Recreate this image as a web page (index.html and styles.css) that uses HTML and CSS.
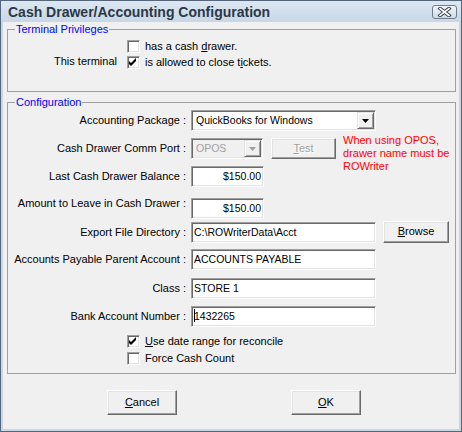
FILE: index.html
```html
<!DOCTYPE html>
<html lang="en">
<head>
<meta charset="utf-8">
<title>Cash Drawer/Accounting Configuration</title>
<link rel="stylesheet" href="styles.css">
</head>
<body>
<div class="window">
  <div class="titlebar">
    <span class="title">Cash Drawer/Accounting Configuration</span>
    <span class="close">
      <svg width="17" height="10" viewBox="0 0 17 10">
        <path d="M4 1.5 L13 8.5 M13 1.5 L4 8.5" stroke="#3a4654" stroke-width="3.6" stroke-linecap="square"/>
        <path d="M4 1.5 L13 8.5 M13 1.5 L4 8.5" stroke="#ffffff" stroke-width="1.6" stroke-linecap="square"/>
      </svg>
    </span>
  </div>
  <div class="client">
    <fieldset class="group group-term">
      <legend>Terminal Privileges</legend>
      <div class="term-grid">
        <div class="term-label">This terminal</div>
        <label class="check term-c1"><span class="cb"></span><span>has a cash <u>d</u>rawer.</span></label>
        <label class="check term-c2"><span class="cb"><svg width="9" height="9" viewBox="0 0 9 9"><polygon points="0,3 2,5 7,0 7,3 2,8 0,6" fill="#000"/></svg></span><span>is allowed to close t<u>i</u>ckets.</span></label>
      </div>
    </fieldset>

    <fieldset class="group group-config">
      <legend>Configuration</legend>

      <div class="row mt1">
        <span class="lbl">Accounting Package :</span>
        <div class="combo w-wide">
          <span class="val">QuickBooks for Windows</span>
          <span class="drop"><svg width="7" height="4" viewBox="0 0 7 4"><polygon points="0,0 7,0 3.5,4" fill="#000"/></svg></span>
        </div>
      </div>

      <div class="row mt7">
        <span class="lbl">Cash Drawer Comm Port :</span>
        <div class="combo disabled w-port">
          <span class="val">OPOS</span>
          <span class="drop"><svg width="7" height="4" viewBox="0 0 7 4"><polygon points="0,0 7,0 3.5,4" fill="#a0a0a0"/></svg></span>
        </div>
        <button class="btn btn-test" disabled><u>T</u>est</button>
        <div class="note">When using OPOS,<br>drawer name must be<br>ROWriter</div>
      </div>

      <div class="row mt7">
        <span class="lbl">Last Cash Drawer Balance :</span>
        <div class="edit w-money">$150.00</div>
      </div>

      <div class="row mt11">
        <span class="lbl lbl-top">Amount to Leave in Cash Drawer :</span>
        <div class="edit w-money">$150.00</div>
      </div>

      <div class="row mt3">
        <span class="lbl">Export File Directory :</span>
        <div class="edit w-wide">C:\ROWriterData\Acct</div>
        <button class="btn btn-browse"><u>B</u>rowse</button>
      </div>

      <div class="row mt6">
        <span class="lbl">Accounts Payable Parent Account :</span>
        <div class="edit w-wide">ACCOUNTS PAYABLE</div>
      </div>

      <div class="row mt8">
        <span class="lbl">Class :</span>
        <div class="edit w-wide">STORE 1</div>
      </div>

      <div class="row mt7">
        <span class="lbl">Bank Account Number :</span>
        <div class="edit w-wide"><span class="caret"></span>1432265</div>
      </div>

      <label class="check cfg-check mt8"><span class="cb"><svg width="9" height="9" viewBox="0 0 9 9"><polygon points="0,3 2,5 7,0 7,3 2,8 0,6" fill="#000"/></svg></span><span><u>U</u>se date range for reconcile</span></label>
      <label class="check cfg-check mt4"><span class="cb"></span><span>Force Cash Count</span></label>
    </fieldset>

    <div class="actions">
      <button class="btn btn-main"><u>C</u>ancel</button>
      <button class="btn btn-main"><u>O</u>K</button>
    </div>
  </div>
</div>
</body>
</html>
```

FILE: styles.css
```css
* { box-sizing: border-box; }
html, body { margin: 0; padding: 0; }
body {
  width: 462px;
  height: 432px;
  overflow: hidden;
  font-family: "Liberation Sans", Arial, sans-serif;
  font-size: 11px;
  color: #000;
  background: #f0f0f0;
}
.window {
  width: 462px;
  height: 432px;
  border: 1px solid #56667a;
  background: #c8d7e7;
  display: flex;
  flex-direction: column;
}
.titlebar {
  height: 21px;
  flex: none;
  display: flex;
  justify-content: space-between;
  align-items: flex-start;
  background: linear-gradient(#dde7f2, #c8d7e7);
}
.title {
  font-weight: bold;
  font-size: 14px;
  line-height: 22px;
  color: #2b3846;
  padding-left: 7px;
}
.close {
  margin: 4px 4px 0 0;
  width: 25px;
  height: 14px;
  border: 1px solid #6e7c8b;
  border-radius: 3px;
  background: linear-gradient(#f2f5f9, #d0dbe6);
  display: flex;
  align-items: center;
  justify-content: center;
}
.close svg { display: block; }
.client {
  flex: 1;
  margin: 0 2px 2px;
  background: #f0f0f0;
  padding: 0 3px 0 4px;
}
.group {
  margin: 0;
  padding: 0;
  border: 1px solid #a0a0a0;
  min-width: 0;
}
.group legend {
  margin-left: 7px;
  padding: 0 1px;
  color: #0000ff;
  font-size: 11px;
  line-height: 14px;
}
.group-term { padding-bottom: 21px; }
.term-grid {
  margin-top: 2px;
  padding-left: 46px;
  display: grid;
  grid-template-columns: 73px auto;
  grid-template-rows: 16px 16px;
  align-items: center;
}
.term-label { grid-row: 2; grid-column: 1; line-height: 13px; margin-top: -2px; }
.term-c1 { grid-row: 1; grid-column: 2; }
.term-c2 { grid-row: 2; grid-column: 2; }

.check {
  display: flex;
  align-items: center;
  gap: 5px;
  height: 13px;
  line-height: 13px;
}
.cb {
  width: 13px;
  height: 13px;
  flex: none;
  background: #fff;
  border: 1px solid;
  border-color: #a0a0a0 #fff #fff #a0a0a0;
  box-shadow: inset 1px 1px #696969, inset -1px -1px #e3e3e3;
  display: flex;
  align-items: center;
  justify-content: center;
}
.cb svg { display: block; }

.group-config { margin-top: 3px; padding-bottom: 8px; }
.row {
  display: flex;
  align-items: center;
  height: 21px;
}
.mt1 { margin-top: 1px; }
.mt3 { margin-top: 3px; }
.mt4 { margin-top: 4px; }
.mt6 { margin-top: 6px; }
.mt7 { margin-top: 7px; }
.mt8 { margin-top: 8px; }
.mt11 { margin-top: 11px; }

.lbl {
  flex: none;
  width: 178px;
  margin-right: 5px;
  text-align: right;
  white-space: nowrap;
  line-height: 13px;
}
.lbl-top { align-self: flex-start; margin-top: -1px; }

.edit, .combo {
  flex: none;
  height: 21px;
  background: #fff;
  border: 1px solid;
  border-color: #a0a0a0 #fff #fff #a0a0a0;
  box-shadow: inset 1px 1px #696969, inset -1px -1px #e3e3e3;
  font-size: 10.5px;
  line-height: 19px;
  white-space: nowrap;
}
.edit { padding: 0 2px 0 2px; }
.w-wide { width: 185px; }
.w-money { width: 73px; text-align: right; padding-right: 2px; }
.w-port { width: 72px; }
.caret {
  display: inline-block;
  width: 1px;
  height: 13px;
  background: #000;
  vertical-align: -2px;
  margin-right: -1px;
}

.combo {
  display: flex;
  align-items: center;
  padding: 1px;
}
.combo .val { flex: 1; padding-left: 3px; line-height: 17px; }
.combo .drop {
  flex: none;
  width: 17px;
  height: 17px;
  background: #f0f0f0;
  border: 1px solid;
  border-color: #e3e3e3 #696969 #696969 #e3e3e3;
  box-shadow: inset 1px 1px #fff, inset -1px -1px #a0a0a0;
  display: flex;
  align-items: center;
  justify-content: center;
}
.combo .drop svg { display: block; }
.combo.disabled { background: #f0f0f0; color: #a0a0a0; }

.btn {
  flex: none;
  font-family: "Liberation Sans", Arial, sans-serif;
  font-size: 11px;
  color: #000;
  background: #f0f0f0;
  border: 1px solid;
  border-color: #fff #696969 #696969 #fff;
  box-shadow: inset -1px -1px #a0a0a0, inset 1px 1px #e3e3e3;
  padding: 0;
  margin: 0;
  line-height: 13px;
}
.btn:disabled { color: #a0a0a0; text-shadow: 1px 1px #fff; }
.btn-test { width: 65px; height: 21px; margin-left: 8px; }
.btn-browse { width: 66px; height: 22px; margin-left: 7px; margin-top: -2px; }
.note {
  flex: none;
  align-self: flex-start;
  margin-left: 7px;
  margin-top: -4px;
  height: 21px;
  color: #ff0000;
  font-size: 11px;
  line-height: 13px;
  white-space: nowrap;
}
.cfg-check { padding-left: 119px; }

.actions {
  margin-top: 16px;
  padding-left: 100px;
  display: flex;
  gap: 114px;
}
.btn-main { width: 70px; height: 25px; }
```
